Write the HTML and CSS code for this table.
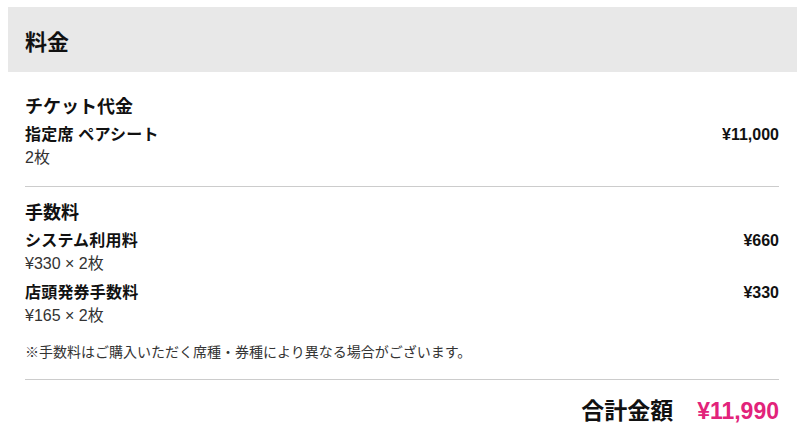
FILE: index.html
```html
<!DOCTYPE html>
<html lang="ja">
<head>
  <meta charset="UTF-8">
  <title>料金</title>
  <link rel="stylesheet" href="styles.css">
</head>
<body>
  <section class="price">
    <h2 class="price-title">料金</h2>

    <div class="price-body">
      <div class="group">
        <h3 class="group-title">チケット代金</h3>
        <div class="line">
          <div>
            <p class="line-name">指定席 ペアシート</p>
            <p class="line-sub">2枚</p>
          </div>
          <p class="line-amount">¥11,000</p>
        </div>
      </div>

      <div class="group">
        <h3 class="group-title">手数料</h3>
        <div class="line">
          <div>
            <p class="line-name">システム利用料</p>
            <p class="line-sub">¥330 × 2枚</p>
          </div>
          <p class="line-amount">¥660</p>
        </div>
        <div class="line">
          <div>
            <p class="line-name">店頭発券手数料</p>
            <p class="line-sub">¥165 × 2枚</p>
          </div>
          <p class="line-amount">¥330</p>
        </div>
        <p class="note">※手数料はご購入いただく席種・券種により異なる場合がございます。</p>
      </div>

      <div class="total">
        <span class="total-label">合計金額</span>
        <span class="total-amount">¥11,990</span>
      </div>
    </div>
  </section>
</body>
</html>
```

FILE: styles.css
```css
* { margin: 0; padding: 0; box-sizing: border-box; }
body {
  margin: 7px 3px 0 8px;
  font-family: "Liberation Sans", "Noto Sans CJK JP", sans-serif;
  color: #111;
  background: white;
}

.price-title {
  background: #e8e8e8;
  height: 65px;
  display: flex;
  align-items: center;
  padding-left: 17px;
  font-size: 22px;
  font-weight: bold;
}

.price-body { padding: 9px 18px 0 17px; }

.group { padding: 13px 0 17px; border-bottom: 1px solid #ccc; }
.group-title { font-size: 18px; font-weight: bold; line-height: 26px; }

.line { display: flex; justify-content: space-between; align-items: flex-start; margin-top: 3px; }
.line + .line { margin-top: 6px; }
.line-name { font-size: 16px; font-weight: bold; line-height: 23px; letter-spacing: 0.2px; }
.line-sub { font-size: 16px; color: #333; line-height: 23px; }
.line-amount { font-size: 16px; font-weight: bold; line-height: 23px; }

.note { font-size: 14px; color: #333; margin-top: 15px; line-height: 20px; }

.total { display: flex; justify-content: flex-end; align-items: center; gap: 24px; padding-top: 16px; line-height: 30px; }
.total-label { font-size: 23px; font-weight: bold; }
.total-amount { font-size: 23px; font-weight: bold; color: #e2237a; }
```
